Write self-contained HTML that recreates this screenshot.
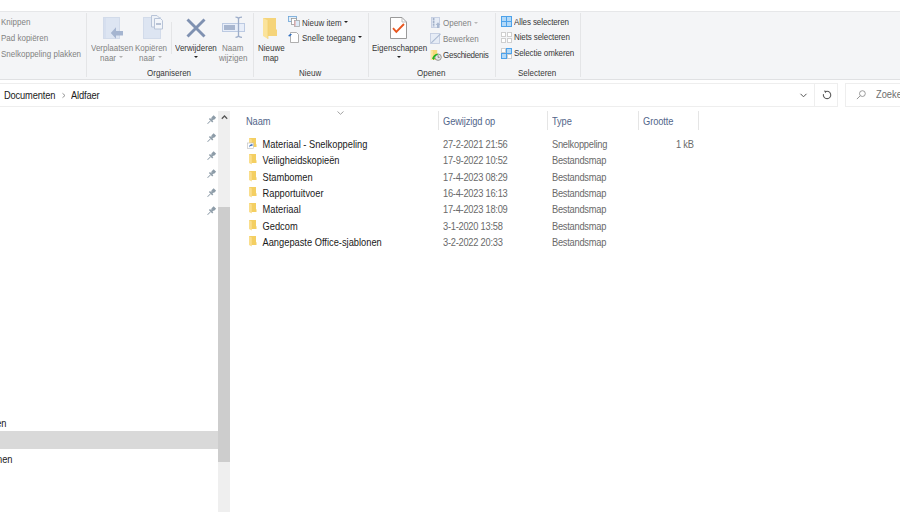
<!DOCTYPE html>
<html><head><meta charset="utf-8">
<style>
*{margin:0;padding:0;box-sizing:border-box}
html,body{width:900px;height:512px;overflow:hidden;background:#fff}
body{position:relative;font-family:"Liberation Sans",sans-serif;}
.a{position:absolute;white-space:nowrap}
svg{position:absolute;overflow:visible}
.rb{font-size:8px;line-height:10px;color:#383838;transform:scaleY(1.1);transform-origin:0 0}
.dis{color:#828282}
.sep{position:absolute;width:1px;background:#e4e5e7}
.ct{font-size:9.3px;line-height:11px;color:#1a1a1a;letter-spacing:0;transform:scaleY(1.1);transform-origin:0 0}
.gr{color:#6a6a6a;letter-spacing:-0.25px}
.hd{font-size:9.3px;line-height:11px;color:#53668a;letter-spacing:-0.1px;transform:scaleY(1.1);transform-origin:0 0}
.csep{position:absolute;width:1px;top:111px;height:19px;background:#e5e5e5}
</style></head>
<body>
<!-- top border -->
<div class="a" style="left:0;top:11px;width:900px;height:1px;background:#e6e7e9"></div>
<!-- ribbon -->
<div class="a" style="left:0;top:12px;width:900px;height:67px;background:#f4f5f7"></div>
<div class="a" style="left:0;top:79px;width:900px;height:1px;background:#e0e1e3"></div>

<!-- separators -->
<div class="sep" style="left:86px;top:13px;height:64px"></div>
<div class="sep" style="left:171px;top:22px;height:32px"></div>
<div class="sep" style="left:253px;top:13px;height:64px"></div>
<div class="sep" style="left:368px;top:13px;height:64px"></div>
<div class="sep" style="left:495px;top:13px;height:64px"></div>
<div class="sep" style="left:580px;top:13px;height:64px"></div>

<!-- clipboard group (partial) -->
<div class="a rb dis" style="left:1px;top:17px">Knippen</div>
<div class="a rb dis" style="left:1px;top:33px">Pad kopiëren</div>
<div class="a rb dis" style="left:1px;top:49px">Snelkoppeling plakken</div>

<!-- Organiseren -->
<svg style="left:103px;top:17px" width="22" height="23" viewBox="0 0 22 23">
  <rect x="0.5" y="0.5" width="16" height="21" fill="#dde5f2" stroke="#d2dbea"/>
  <rect x="1.5" y="1" width="1" height="20" fill="#d0daeb"/>
  <path d="M8 10 L8 13.5 L13 13.5 L13 18.5 L20 18.5 L20 13.5 L13 13.5 Z" fill="none"/>
  <path d="M7.8 16 L13 10.2 L13 14 L20 14 L20 18.5 L13 18.5 L13 21.8 Z" fill="#a5b5d0"/>
</svg>
<svg style="left:143px;top:15px" width="22" height="25" viewBox="0 0 22 25">
  <rect x="0.5" y="2.5" width="17" height="21" fill="#dde5f2" stroke="#d2dbea"/>
  <path d="M8.5 0.5 H14 L16 2.5 V12 H8.5 Z" fill="#eef2f8" stroke="#b8c4d8"/>
  <path d="M11.5 3.5 H17.5 L19.5 5.5 V14 H11.5 Z" fill="#f2f5fa" stroke="#b8c4d8"/>
  <rect x="13" y="8" width="5" height="2" fill="#b7c2d5"/>
</svg>
<svg style="left:185.5px;top:18px" width="20" height="20" viewBox="0 0 20 20">
  <path d="M1.5 1.5 L18.5 18.5 M18.5 1.5 L1.5 18.5" stroke="#7f91b1" stroke-width="2.9"/>
</svg>
<svg style="left:221px;top:16px" width="24" height="23" viewBox="0 0 24 23">
  <rect x="1.5" y="7.5" width="22" height="8" fill="#e8eef9" stroke="#bccae2"/>
  <rect x="3" y="9" width="11" height="5" fill="#a8b6cf"/>
  <path d="M17.5 1.5 V21 M14.5 1.2 Q17.5 1.2 17.5 3 Q17.5 1.2 21 1.2 M14.5 21.3 Q17.5 21.3 17.5 19.5 Q17.5 21.3 21 21.3" stroke="#9dadc9" stroke-width="1.3" fill="none"/>
</svg>
<div class="a rb dis" style="left:91px;top:43px">Verplaatsen</div>
<div class="a rb dis" style="left:100px;top:53px">naar</div>
<svg style="left:119px;top:56px" width="4" height="3"><path d="M0 0 H4 L2 2 Z" fill="#b0b0b0"/></svg>
<div class="a rb dis" style="left:135px;top:43px">Kopiëren</div>
<div class="a rb dis" style="left:139px;top:53px">naar</div>
<svg style="left:158px;top:56px" width="4" height="3"><path d="M0 0 H4 L2 2 Z" fill="#b0b0b0"/></svg>
<div class="a rb" style="left:175px;top:43px">Verwijderen</div>
<svg style="left:193.5px;top:55.5px" width="4" height="2"><path d="M0 0 H4 L2 2 Z" fill="#222"/></svg>
<div class="a rb dis" style="left:222px;top:43px">Naam</div>
<div class="a rb dis" style="left:219px;top:53px">wijzigen</div>
<div class="a rb" style="left:147px;top:68px">Organiseren</div>

<!-- Nieuw -->
<svg style="left:262px;top:17px" width="16" height="23" viewBox="0 0 16 23">
  <path d="M1 1 H14 V12 L15 13 V19 H1 Z" fill="#f5d47a"/>
  <path d="M1 1 L6 3.5 V22 L1 19 Z" fill="#fbe39b"/>
  <path d="M6 3.5 V22" stroke="#f0cd6a" stroke-width="0.6"/>
</svg>
<div class="a rb" style="left:258px;top:43px">Nieuwe</div>
<div class="a rb" style="left:263px;top:53px">map</div>
<svg style="left:288px;top:16px" width="12" height="11" viewBox="0 0 12 11">
  <rect x="0.5" y="0.5" width="8" height="5" fill="#e4eff9" stroke="#6aa3d8" stroke-width="0.8"/>
  <rect x="3.5" y="2.5" width="5" height="6" fill="#fff" stroke="#9a9a9a" stroke-width="0.8"/>
  <rect x="6.5" y="4.5" width="5" height="6" fill="#dceaf7" stroke="#a8a8a8" stroke-width="0.8"/>
  <rect x="6.5" y="5" width="1" height="5" fill="#e9a0a0"/>
</svg>
<div class="a rb" style="left:302px;top:18px">Nieuw item</div>
<svg style="left:344px;top:20.5px" width="4" height="2"><path d="M0 0 H4 L2 2 Z" fill="#222"/></svg>
<svg style="left:288px;top:32px" width="11" height="11" viewBox="0 0 11 11">
  <path d="M2.5 0.5 H8.5 L10.5 2.5 V10.5 H2.5 Z" fill="#fff" stroke="#9c9c9c" stroke-width="0.8"/>
  <path d="M0 4 L2 2 H4 L2 4.5 Z" fill="#2f6fc0"/>
</svg>
<div class="a rb" style="left:302px;top:33px">Snelle toegang</div>
<svg style="left:357.5px;top:36px" width="4" height="2"><path d="M0 0 H4 L2 2 Z" fill="#222"/></svg>
<div class="a rb" style="left:299px;top:68px">Nieuw</div>

<!-- Openen -->
<svg style="left:390px;top:17px" width="18" height="23" viewBox="0 0 18 23">
  <path d="M0.5 0.5 H12 L16.5 5 V21.5 H0.5 Z" fill="#fff" stroke="#8e8e8e" stroke-width="0.9"/>
  <path d="M12 0.5 V5 H16.5" fill="none" stroke="#b5b5b5" stroke-width="0.9"/>
  <path d="M3 11.2 L6.3 14.8 L14 7" fill="none" stroke="#e8561f" stroke-width="1.9"/>
</svg>
<div class="a rb" style="left:372px;top:43px">Eigenschappen</div>
<svg style="left:396.7px;top:55.5px" width="4" height="2"><path d="M0 0 H4 L2 2 Z" fill="#222"/></svg>
<svg style="left:430.5px;top:17px" width="11" height="12" viewBox="0 0 11 12">
  <rect x="0.5" y="0.5" width="8" height="10" fill="#e6ecf6" stroke="#c3cde0" stroke-width="0.9"/>
  <path d="M2.6 1 V10" stroke="#a3b1c9" stroke-width="1.7" stroke-dasharray="2.2 0.6"/>
  <path d="M6 11 V8 H4.6 L7 5.3 L9.4 8 H8 V11 Z" fill="#a9b8d0"/>
</svg>
<div class="a rb dis" style="left:443px;top:18px">Openen</div>
<svg style="left:473.5px;top:21.5px" width="4" height="2"><path d="M0 0 H4 L2 2 Z" fill="#b8b8b8"/></svg>
<svg style="left:430px;top:33px" width="11" height="12" viewBox="0 0 11 12">
  <rect x="0.5" y="0.5" width="9" height="10" fill="#e6ecf6" stroke="#c3cde0" stroke-width="0.9"/>
  <path d="M1.3 9.8 L10.5 0.8" stroke="#aab9d1" stroke-width="1.1"/>
</svg>
<div class="a rb dis" style="left:443px;top:34px">Bewerken</div>
<svg style="left:430px;top:49px" width="12" height="12" viewBox="0 0 12 12">
  <path d="M0.8 1 H7.2 V11 H0.8 Z" fill="#f8d979"/>
  <path d="M0.8 1 L2.8 1.8 V11 H0.8 Z" fill="#fbe7a6"/>
  <circle cx="8.1" cy="8.2" r="3.2" fill="#e6e6e6" stroke="#8f8f8f" stroke-width="0.9"/>
  <path d="M8.1 6.3 V8.4 H9.6" stroke="#6f6f6f" stroke-width="0.8" fill="none"/>
  <path d="M3 10 Q4 6 7.6 5.2" stroke="#22b422" stroke-width="1.6" fill="none"/>
  <path d="M2.2 8.8 L5 9 L3.5 11 Z" fill="#22b422"/>
</svg>
<div class="a rb" style="left:443px;top:50px;letter-spacing:-0.25px">Geschiedenis</div>
<div class="a rb" style="left:417px;top:68px">Openen</div>

<!-- Selecteren -->
<svg style="left:501px;top:16px" width="11" height="11" viewBox="0 0 11 11">
  <rect x="0.5" y="0.5" width="10" height="10" fill="#b3d9f8" stroke="#4da2ea"/>
  <path d="M5.5 0 V11 M0 5.5 H11" stroke="#4da2ea"/>
</svg>
<div class="a rb" style="left:514px;top:17px;letter-spacing:-0.1px">Alles selecteren</div>
<svg style="left:501px;top:32px" width="11" height="11" viewBox="0 0 11 11">
  <rect x="0.5" y="0.5" width="4" height="4" fill="#fff" stroke="#cfcfcf"/>
  <rect x="6.5" y="0.5" width="4" height="4" fill="#fff" stroke="#cfcfcf"/>
  <rect x="0.5" y="6.5" width="4" height="4" fill="#fff" stroke="#cfcfcf"/>
  <rect x="6.5" y="6.5" width="4" height="4" fill="#fff" stroke="#cfcfcf"/>
</svg>
<div class="a rb" style="left:514px;top:32px;letter-spacing:-0.1px">Niets selecteren</div>
<svg style="left:501px;top:48px" width="11" height="11" viewBox="0 0 11 11">
  <rect x="0.5" y="0.5" width="4" height="4" fill="#fff" stroke="#cfcfcf"/>
  <rect x="5.5" y="0.5" width="5" height="5" fill="#b3d9f8" stroke="#4da2ea"/>
  <rect x="0.5" y="5.5" width="5" height="5" fill="#b3d9f8" stroke="#4da2ea"/>
  <rect x="6.5" y="6.5" width="4" height="4" fill="#fff" stroke="#cfcfcf"/>
</svg>
<div class="a rb" style="left:514px;top:48px;letter-spacing:-0.1px">Selectie omkeren</div>
<div class="a rb" style="left:518px;top:68px">Selecteren</div>

<!-- address bar -->
<div class="a" style="left:-1px;top:83px;width:839px;height:24px;border:1px solid #eeeeee;background:#fff"></div>
<div class="a" style="left:814px;top:84px;width:1px;height:22px;background:#eeeeee"></div>
<div class="a" style="left:845px;top:83px;width:60px;height:24px;border:1px solid #eeeeee;background:#fff"></div>
<div class="a ct" style="left:4px;top:90px;color:#1a1a1a;letter-spacing:-0.15px">Documenten</div>
<svg style="left:61.5px;top:92.5px" width="4" height="5" viewBox="0 0 4 5"><path d="M0.5 0.3 L3 2.5 L0.5 4.7" stroke="#888" stroke-width="0.9" fill="none"/></svg>
<div class="a ct" style="left:71px;top:90px;color:#1a1a1a;letter-spacing:-0.15px">Aldfaer</div>
<svg style="left:800px;top:93px" width="7" height="5" viewBox="0 0 7 5"><path d="M0.5 0.8 L3.5 3.8 L6.5 0.8" stroke="#555" stroke-width="1" fill="none"/></svg>
<svg style="left:822px;top:90px" width="10" height="10" viewBox="0 0 10 10"><path d="M3.3 1.7 A3.7 3.7 0 1 1 1.45 4.1" stroke="#5a5a5a" stroke-width="1.1" fill="none"/><path d="M1.9 0.6 L4.6 0.9 L3.4 3.2 Z" fill="#5a5a5a"/></svg>
<svg style="left:856px;top:90px" width="10" height="10" viewBox="0 0 10 10"><circle cx="6.4" cy="3.6" r="2.9" stroke="#8a8a8a" stroke-width="0.85" fill="none"/><path d="M4.3 5.7 L0.9 9.1" stroke="#8a8a8a" stroke-width="0.9"/></svg>
<div class="a ct" style="left:876px;top:89px;color:#6d6d6d">Zoeken</div>

<!-- nav pane -->
<div class="a" style="left:218px;top:111px;width:12px;height:401px;background:#efefef"></div>
<div class="a" style="left:218px;top:207px;width:12px;height:255px;background:#cdcdcd"></div>
<svg style="left:220.5px;top:114.5px" width="7" height="5" viewBox="0 0 7 5"><path d="M0.8 3.7 L3.5 1 L6.2 3.7" stroke="#555" stroke-width="1.25" fill="none"/></svg>
<div class="a" style="left:0;top:431px;width:218px;height:18px;background:#d9d9d9"></div>
<div class="a ct" style="right:893.5px;top:417.5px">Stambomen</div>
<div class="a ct" style="right:887.5px;top:453.5px">Gezinnen</div>

<!-- pins -->
<svg style="left:0;top:0" width="1" height="1"><g transform="translate(211.2 120.1) rotate(45)" fill="#8d9ca8"><rect x="-1.8" y="-5.2" width="3.6" height="3.2"/><rect x="-1.1" y="-2.4" width="2.2" height="2"/><rect x="-2.4" y="-0.6" width="4.8" height="1.5"/><rect x="-0.45" y="0.9" width="0.9" height="4.3"/></g></svg>
<svg style="left:0;top:0" width="1" height="1"><g transform="translate(211.2 138.1) rotate(45)" fill="#8d9ca8"><rect x="-1.8" y="-5.2" width="3.6" height="3.2"/><rect x="-1.1" y="-2.4" width="2.2" height="2"/><rect x="-2.4" y="-0.6" width="4.8" height="1.5"/><rect x="-0.45" y="0.9" width="0.9" height="4.3"/></g></svg>
<svg style="left:0;top:0" width="1" height="1"><g transform="translate(211.2 156.1) rotate(45)" fill="#8d9ca8"><rect x="-1.8" y="-5.2" width="3.6" height="3.2"/><rect x="-1.1" y="-2.4" width="2.2" height="2"/><rect x="-2.4" y="-0.6" width="4.8" height="1.5"/><rect x="-0.45" y="0.9" width="0.9" height="4.3"/></g></svg>
<svg style="left:0;top:0" width="1" height="1"><g transform="translate(211.2 174.1) rotate(45)" fill="#8d9ca8"><rect x="-1.8" y="-5.2" width="3.6" height="3.2"/><rect x="-1.1" y="-2.4" width="2.2" height="2"/><rect x="-2.4" y="-0.6" width="4.8" height="1.5"/><rect x="-0.45" y="0.9" width="0.9" height="4.3"/></g></svg>
<svg style="left:0;top:0" width="1" height="1"><g transform="translate(211.2 193.1) rotate(45)" fill="#8d9ca8"><rect x="-1.8" y="-5.2" width="3.6" height="3.2"/><rect x="-1.1" y="-2.4" width="2.2" height="2"/><rect x="-2.4" y="-0.6" width="4.8" height="1.5"/><rect x="-0.45" y="0.9" width="0.9" height="4.3"/></g></svg>
<svg style="left:0;top:0" width="1" height="1"><g transform="translate(211.2 211.1) rotate(45)" fill="#8d9ca8"><rect x="-1.8" y="-5.2" width="3.6" height="3.2"/><rect x="-1.1" y="-2.4" width="2.2" height="2"/><rect x="-2.4" y="-0.6" width="4.8" height="1.5"/><rect x="-0.45" y="0.9" width="0.9" height="4.3"/></g></svg>

<!-- headers -->
<svg style="left:337px;top:111px" width="7" height="4" viewBox="0 0 7 4"><path d="M0.5 0.5 L3.5 3.3 L6.5 0.5" stroke="#999" stroke-width="0.9" fill="none"/></svg>
<div class="a hd" style="left:246px;top:116px">Naam</div>
<div class="a hd" style="left:443px;top:116px">Gewijzigd op</div>
<div class="a hd" style="left:552px;top:116px">Type</div>
<div class="a hd" style="left:643px;top:116px">Grootte</div>
<div class="csep" style="left:438px"></div>
<div class="csep" style="left:547px"></div>
<div class="csep" style="left:638px"></div>
<div class="csep" style="left:698px"></div>

<!-- rows -->
<div id="rows"></div>
<svg style="left:249px;top:138px" width="9" height="11" viewBox="0 0 9 11"><path d="M0 0 H7 V6 L7.5 6.5 V9 H0 Z" fill="#f4cf62"/><path d="M0 0 L2.8 1.5 V10.5 L0 9 Z" fill="#fade8c"/><rect x="-1.5" y="5" width="6" height="5.5" fill="#fff" stroke="#bbb" stroke-width="0.6"/><path d="M0.5 9.5 L0.5 7.5 Q0.8 6.6 2.5 6.5 V5.8 L4 7 L2.5 8.2 V7.5 Q1.3 7.6 0.5 9.5 Z" fill="#2a62b8"/></svg>
<svg style="left:249px;top:154px" width="9" height="11" viewBox="0 0 9 11"><path d="M0 0 H7 V6 L7.5 6.5 V9 H0 Z" fill="#f4cf62"/><path d="M0 0 L2.8 1.5 V10.5 L0 9 Z" fill="#fade8c"/></svg>
<svg style="left:249px;top:171px" width="9" height="11" viewBox="0 0 9 11"><path d="M0 0 H7 V6 L7.5 6.5 V9 H0 Z" fill="#f4cf62"/><path d="M0 0 L2.8 1.5 V10.5 L0 9 Z" fill="#fade8c"/></svg>
<svg style="left:249px;top:187px" width="9" height="11" viewBox="0 0 9 11"><path d="M0 0 H7 V6 L7.5 6.5 V9 H0 Z" fill="#f4cf62"/><path d="M0 0 L2.8 1.5 V10.5 L0 9 Z" fill="#fade8c"/></svg>
<svg style="left:249px;top:203px" width="9" height="11" viewBox="0 0 9 11"><path d="M0 0 H7 V6 L7.5 6.5 V9 H0 Z" fill="#f4cf62"/><path d="M0 0 L2.8 1.5 V10.5 L0 9 Z" fill="#fade8c"/></svg>
<svg style="left:249px;top:220px" width="9" height="11" viewBox="0 0 9 11"><path d="M0 0 H7 V6 L7.5 6.5 V9 H0 Z" fill="#f4cf62"/><path d="M0 0 L2.8 1.5 V10.5 L0 9 Z" fill="#fade8c"/></svg>
<svg style="left:249px;top:236px" width="9" height="11" viewBox="0 0 9 11"><path d="M0 0 H7 V6 L7.5 6.5 V9 H0 Z" fill="#f4cf62"/><path d="M0 0 L2.8 1.5 V10.5 L0 9 Z" fill="#fade8c"/></svg>

<div class="a ct" style="left:262.5px;top:139px">Materiaal - Snelkoppeling</div>
<div class="a ct" style="left:262.5px;top:155px">Veiligheidskopieën</div>
<div class="a ct" style="left:262.5px;top:172px">Stambomen</div>
<div class="a ct" style="left:262.5px;top:188px">Rapportuitvoer</div>
<div class="a ct" style="left:262.5px;top:204px">Materiaal</div>
<div class="a ct" style="left:262.5px;top:221px">Gedcom</div>
<div class="a ct" style="left:262.5px;top:237px">Aangepaste Office-sjablonen</div>

<div class="a ct gr" style="left:443px;top:139px">27-2-2021 21:56</div>
<div class="a ct gr" style="left:443px;top:155px">17-9-2022 10:52</div>
<div class="a ct gr" style="left:443px;top:172px">17-4-2023 08:29</div>
<div class="a ct gr" style="left:443px;top:188px">16-4-2023 16:13</div>
<div class="a ct gr" style="left:443px;top:204px">17-4-2023 18:09</div>
<div class="a ct gr" style="left:443px;top:221px">3-1-2020 13:58</div>
<div class="a ct gr" style="left:443px;top:237px">3-2-2022 20:33</div>

<div class="a ct gr" style="left:552px;top:139px">Snelkoppeling</div>
<div class="a ct gr" style="left:552px;top:155px">Bestandsmap</div>
<div class="a ct gr" style="left:552px;top:172px">Bestandsmap</div>
<div class="a ct gr" style="left:552px;top:188px">Bestandsmap</div>
<div class="a ct gr" style="left:552px;top:204px">Bestandsmap</div>
<div class="a ct gr" style="left:552px;top:221px">Bestandsmap</div>
<div class="a ct gr" style="left:552px;top:237px">Bestandsmap</div>
<div class="a ct gr" style="left:676px;top:139px">1 kB</div>

</body></html>
